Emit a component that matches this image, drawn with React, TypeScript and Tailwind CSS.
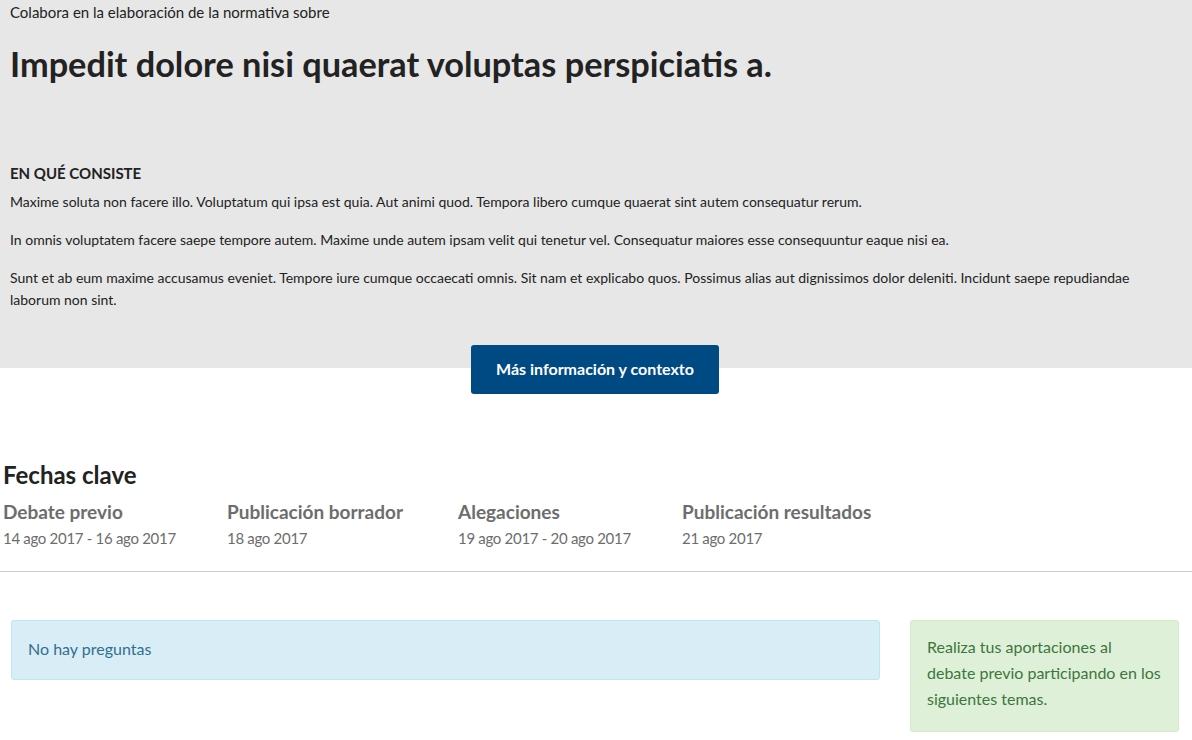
import React from "react";

const font = { fontFamily: "Lato, 'Open Sans', sans-serif" };

export default function App() {
  const fechas = [
    { t: "Debate previo", d: "14 ago 2017 - 16 ago 2017", w: "w-[224px]" },
    { t: "Publicación borrador", d: "18 ago 2017", w: "w-[231px]" },
    { t: "Alegaciones", d: "19 ago 2017 - 20 ago 2017", w: "w-[224px]" },
    { t: "Publicación resultados", d: "21 ago 2017", w: "w-[224px]" },
  ];
  return (
    <div className="w-[1192px] min-h-[740px] bg-white text-[#222222] font-['Lato',sans-serif]" style={font}>
      <div className="bg-[#e7e7e7] px-[10px] h-[368px]">
        <p className="text-[15px] leading-[24px] pt-0">Colabora en la elaboración de la normativa sobre</p>
        <h1 className="text-[34.3px] font-bold leading-[40px] mt-[20px]">Impedit dolore nisi quaerat voluptas perspiciatis a.</h1>
        <h3 className="text-[15px] font-bold uppercase leading-[24px] mt-[77px]">En qué consiste</h3>
        <div className="text-[14px] leading-[22px] mt-[6px]">
          <p>Maxime soluta non facere illo. Voluptatum qui ipsa est quia. Aut animi quod. Tempora libero cumque quaerat sint autem consequatur rerum.</p>
          <p className="mt-[16px]">In omnis voluptatem facere saepe tempore autem. Maxime unde autem ipsam velit qui tenetur vel. Consequatur maiores esse consequuntur eaque nisi ea.</p>
          <p className="mt-[16px]">Sunt et ab eum maxime accusamus eveniet. Tempore iure cumque occaecati omnis. Sit nam et explicabo quos. Possimus alias aut dignissimos dolor deleniti. Incidunt saepe repudiandae laborum non sint.</p>
        </div>
      </div>
      <div className="flex justify-center -mt-[23px] pr-[2px]">
        <button className="w-[248px] h-[49px] pb-[2px] bg-[#004a83] text-white font-bold text-[16px] rounded-[3px]">
          Más información y contexto
        </button>
      </div>
      <div className="px-[3px] mt-[66px]">
        <h2 className="text-[24px] font-bold leading-[30px]">Fechas clave</h2>
        <div className="flex mt-[9px]">
          {fechas.map((f) => (
            <div key={f.t} className={f.w}>
              <div className="text-[19px] font-bold text-[#6d6d6d] leading-[26px]">{f.t}</div>
              <div className="text-[15px] tracking-[-0.3px] text-[#6d6d6d] leading-[26px]">{f.d}</div>
            </div>
          ))}
        </div>
      </div>
      <div className="border-t border-[#cccccc] mt-[20px]" />
      <div className="flex justify-between px-[11px] mt-[48px] items-start pr-[13px]">
        <div className="w-[869px] h-[60px] pb-[3px] bg-[#d9edf7] border border-[#bce8f1] rounded-[3px] text-[#31708f] text-[16px] px-[16px] flex items-center">
          No hay preguntas
        </div>
        <div className="w-[269px] bg-[#dff0d8] border border-[#d6e9c6] rounded-[3px] text-[#3c763d] text-[16px] leading-[26px] px-[16px] pt-[13px] pb-[19px]">
          Realiza tus aportaciones al debate previo participando en los siguientes temas.
        </div>
      </div>
    </div>
  );
}
